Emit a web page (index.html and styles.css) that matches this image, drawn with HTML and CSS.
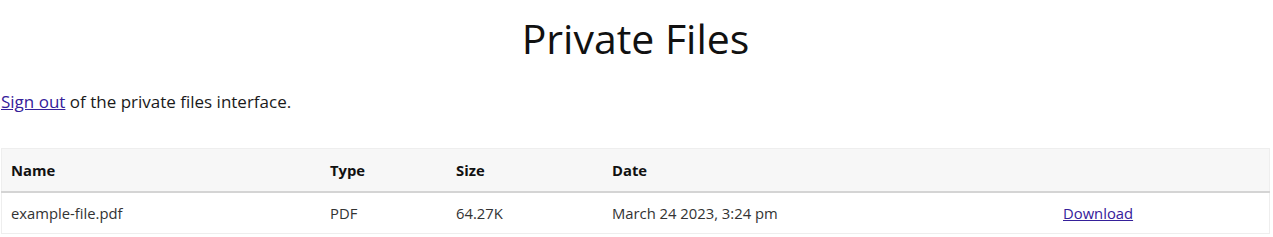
FILE: index.html
```html
<!DOCTYPE html>
<html lang="en">
  <head>
    <meta charset="UTF-8" />
    <meta name="viewport" content="width=device-width, initial-scale=1.0" />
    <title>Private Files</title>
    <link rel="stylesheet" href="styles.css">
  </head>
  <body>
    <h1>Private Files</h1>
    <p class="intro"><a href="#">Sign out</a> of the private files interface.</p>
    <table class="files">
      <thead>
        <tr>
          <th class="col-name">Name</th>
          <th class="col-type">Type</th>
          <th class="col-size">Size</th>
          <th class="col-date">Date</th>
          <th class="col-action"></th>
        </tr>
      </thead>
      <tbody>
        <tr>
          <td>example-file.pdf</td>
          <td>PDF</td>
          <td>64.27K</td>
          <td>March 24 2023, 3:24 pm</td>
          <td><a href="#">Download</a></td>
        </tr>
      </tbody>
    </table>
  </body>
</html>
```

FILE: styles.css
```css
body {
  margin: 0;
  padding: 0 3px 0 1px;
  font-family: "Open Sans", sans-serif;
  color: #1a1a1a;
  background-color: white;
}
h1 {
  font-size: 41px;
  font-weight: 400;
  text-align: center;
  margin: 12px 0 0;
  line-height: 52px;
  color: #111;
}
.intro {
  font-size: 17px;
  margin: 26px 0 34px;
  line-height: 24px;
}
a {
  color: #35209a;
}
.files {
  width: 100%;
  border-collapse: collapse;
  border: 1px solid #eee;
  font-size: 14.8px;
  color: #333;
}
.files th,
.files td {
  text-align: left;
  padding: 0 9px;
}
.files th {
  background-color: #f7f7f7;
  font-weight: 700;
  color: #111;
  height: 42px;
  border-bottom: 2px solid #d4d4d4;
}
.files td {
  height: 40px;
}
.col-name {
  width: 301px;
}
.col-type {
  width: 108px;
}
.col-size {
  width: 138px;
}
.col-date {
  width: 433px;
}
```
